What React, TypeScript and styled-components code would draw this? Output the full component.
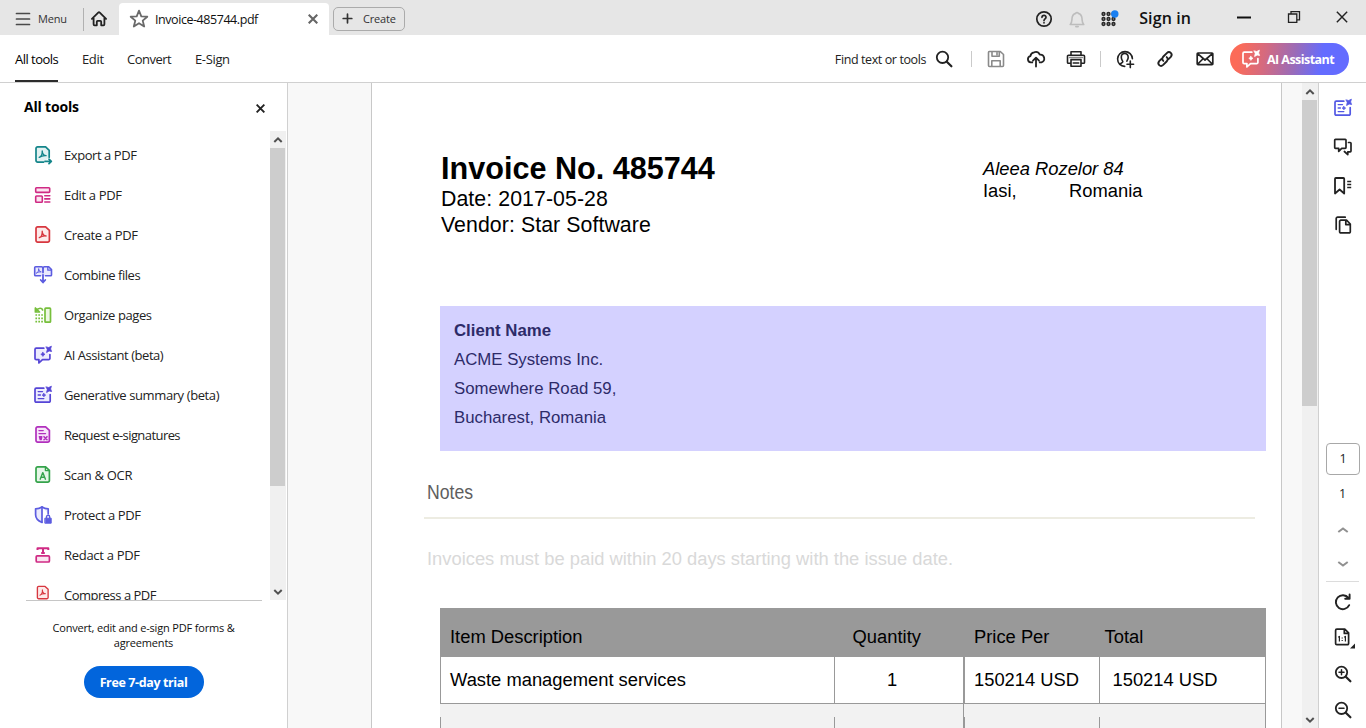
import React from "react";
import styled, { createGlobalStyle } from "styled-components";

const Global = createGlobalStyle`
  * { box-sizing: border-box; }
  html, body { margin: 0; padding: 0; overflow: hidden; background: #fff; }
  body { font-family: "Open Sans", "Noto Sans", sans-serif; color: #222; }
  svg { display: block; flex: none; }
`;

const Window = styled.div`
  width: 1366px;
  height: 728px;
  display: flex;
  flex-direction: column;
  overflow: hidden;
`;

const Label = styled.span<{ $size?: number; $ls?: number; $weight?: number; $color?: string }>`
  font-size: ${(p) => p.$size ?? 13}px;
  letter-spacing: ${(p) => p.$ls ?? -0.36}px;
  font-weight: ${(p) => p.$weight ?? 400};
  color: ${(p) => p.$color ?? "#222"};
  white-space: nowrap;
`;

const Slot = styled.div<{ $w?: number; $h?: number; $raise?: number }>`
  width: ${(p) => (p.$w ? `${p.$w}px` : "auto")};
  height: ${(p) => (p.$h ? `${p.$h}px` : "auto")};
  padding-bottom: ${(p) => p.$raise ?? 0}px;
  flex: none;
  display: flex;
  align-items: center;
  justify-content: center;
`;

const Spacer = styled.div`
  flex: 1;
`;

/* ---------- title bar ---------- */

const TitleBar = styled.header`
  height: 35px;
  flex: none;
  display: flex;
  background: #e6e6e6;
`;

const MenuButton = styled.div`
  width: 83px;
  height: 37px;
  padding-left: 15px;
  display: flex;
  align-items: center;
  gap: 7px;
`;

const TitleDivider = styled.div`
  width: 1px;
  height: 23px;
  margin-top: 8px;
  background: #b1b1b1;
`;

const HomeButton = styled.div`
  width: 35px;
  height: 37px;
  padding-left: 5px;
  display: flex;
  align-items: center;
`;

const Tab = styled.div`
  width: 210px;
  height: 32px;
  margin-top: 3px;
  padding: 0 11px 0 10px;
  border-radius: 4px 4px 0 0;
  background: #fff;
  display: flex;
  align-items: center;
`;

const CreateButton = styled.div`
  width: 72px;
  height: 24px;
  margin: 7px 0 0 4px;
  padding: 0 0 1px 8px;
  border: 1px solid #ababab;
  border-radius: 5px;
  display: flex;
  align-items: center;
  gap: 10px;
`;

const AccountArea = styled.div`
  height: 37px;
  display: flex;
  align-items: center;
`;

const SignIn = styled.div`
  margin-left: 14px;
  padding-bottom: 2px;
`;

const WindowControls = styled.div`
  height: 33px;
  margin-left: 28px;
  display: flex;
  align-items: center;
`;

/* ---------- tool bar ---------- */

const ToolBar = styled.nav`
  height: 48px;
  flex: none;
  display: flex;
  border-bottom: 1px solid #d0d0d0;
  padding-left: 15px;
`;

const ToolTab = styled.div<{ $active?: boolean; $w: number }>`
  width: ${(p) => p.$w}px;
  height: 47px;
  padding-top: 2px;
  margin-right: 24px;
  display: flex;
  align-items: center;
  border-bottom: 2px solid ${(p) => (p.$active ? "#2c2c2c" : "transparent")};
`;

const ToolActions = styled.div`
  height: 48px;
  display: flex;
  align-items: center;
`;

const ToolDivider = styled.div`
  width: 1px;
  height: 16px;
  background: #cacaca;
`;

const AssistantButton = styled.div`
  width: 119px;
  height: 32px;
  margin: 0 17px 0 5px;
  padding-left: 11px;
  border-radius: 16px;
  background: linear-gradient(100deg, #fc6b58 8%, #d46a80 30%, #9a6bb8 54%, #646cff 76%, #646cff 100%);
  display: flex;
  align-items: center;
  gap: 6px;
`;

/* ---------- main ---------- */

const Main = styled.main`
  flex: 1;
  display: flex;
  min-height: 0;
`;

const SidePanel = styled.aside`
  width: 288px;
  flex: none;
  border-right: 1px solid #d0d0d0;
  display: flex;
  flex-direction: column;
`;

const PanelHead = styled.div`
  height: 48px;
  padding: 0 20px 1px 24px;
  display: flex;
  justify-content: space-between;
  align-items: center;
`;

const PanelClose = styled.div`
  padding: 4px 2px 0 0;
`;

const PanelScroll = styled.div`
  height: 470px;
  display: flex;
`;

const ToolList = styled.div`
  width: 236px;
  margin-left: 26px;
  height: 470px;
  padding-top: 4px;
  overflow: hidden;
  border-bottom: 1px solid #c6c6c6;
`;

const ToolItem = styled.div`
  height: 40px;
  display: flex;
  align-items: center;
  padding-left: 7px;
  gap: 11px;
`;

const PanelTrack = styled.div`
  width: 16px;
  height: 469px;
  margin-left: 8px;
  background: #f0f0f0;
`;

const DocTrack = styled.div`
  width: 16px;
  height: 645px;
  display: flex;
  flex-direction: column;
  background: #f0f0f0;
`;

const Thumb = styled.div<{ $h: number }>`
  width: 15px;
  height: ${(p) => p.$h}px;
  background: #cdcdcd;
`;

const Promo = styled.div`
  width: 287px;
  padding-top: 19px;
  display: flex;
  flex-direction: column;
  align-items: center;
`;

const PromoText = styled.p`
  margin: 0 0 16px;
  font-size: 11px;
  line-height: 15px;
  text-align: center;
  color: #111;
  letter-spacing: -0.18px;
`;

const TrialButton = styled.div`
  width: 120px;
  height: 32px;
  border-radius: 16px;
  background: #0265dc;
  display: flex;
  align-items: center;
  justify-content: center;
`;

/* ---------- document ---------- */

const DocArea = styled.section`
  width: 1030px;
  flex: none;
  background: #f8f8f8;
  display: flex;
  padding-left: 83px;
`;

const Page = styled.article`
  width: 911px;
  height: 645px;
  margin-right: 20px;
  padding: 68px 15px 0 0;
  overflow: hidden;
  background: #fff;
  border: solid #c8c8c8;
  border-width: 0 1px;
  font-family: "Liberation Sans", Arial, sans-serif;
  color: #000;
`;

const DocHead = styled.div`
  display: flex;
  padding-left: 69px;
`;

const DocTitle = styled.h1`
  margin: 0;
  width: 542px;
  height: 35px;
  font-size: 30.6px;
  line-height: 35px;
  font-weight: 700;
  white-space: nowrap;
`;

const DocMeta = styled.div`
  font-size: 21.3px;
  line-height: 26px;
  letter-spacing: 0.07px;
`;

const Address = styled.address`
  padding-top: 7px;
  font-size: 18.35px;
  line-height: 22px;
  font-style: normal;
  em { display: block; }
`;

const City = styled.div`
  display: grid;
  grid-template-columns: 86px auto;
`;

const Client = styled.div`
  height: 145px;
  margin: 68px 0 0 68px;
  padding: 10px 0 0 14px;
  background: #d4d1ff;
  color: #2d2b69;
  font-size: 16.8px;
  line-height: 29px;
`;

const Notes = styled.h2`
  margin: 29px 0 0 55px;
  font-size: 20.5px;
  line-height: 24px;
  font-weight: 400;
  color: #5e5e5e;
  transform: scaleX(0.86);
  transform-origin: 0 0;
`;

const Rule = styled.div`
  height: 2px;
  width: 831px;
  margin: 13px 0 29px 52px;
  background: #edece2;
`;

const NoteText = styled.p`
  margin: 0 0 38px 55px;
  font-size: 18.35px;
  line-height: 22px;
  color: #d9d9d9;
`;

const Table = styled.div`
  margin-left: 68px;
  font-size: 18.35px;
  line-height: 22px;
`;

const Row = styled.div<{ $h: number; $bg?: string; $line?: boolean }>`
  display: grid;
  grid-template-columns: 394px 129px 136px 167px;
  height: ${(p) => p.$h}px;
  background: ${(p) => p.$bg ?? "#fff"};
  border-bottom: ${(p) => (p.$line ? "1px solid #999" : "0")};
`;

const Cell = styled.div<{ $l?: number; $r?: number; $top?: number; $pad?: number }>`
  border-left: ${(p) => p.$l ?? 0}px solid #999;
  border-right: ${(p) => p.$r ?? 0}px solid #999;
  padding: ${(p) => p.$top ?? 0}px 0 0 ${(p) => Math.max(0, (p.$pad ?? 0) - (p.$l ?? 0))}px;
  white-space: nowrap;
`;

/* ---------- right rail ---------- */

const Rail = styled.aside`
  width: 48px;
  border-left: 1px solid #d0d0d0;
  display: flex;
  flex-direction: column;
  align-items: center;
  padding-top: 5px;
`;

const PageBox = styled.div`
  width: 34px;
  height: 32px;
  margin: 199px 0 0 1px;
  padding-bottom: 1px;
  border: 1px solid #a8a8a8;
  border-radius: 4px;
  display: flex;
  align-items: center;
  justify-content: center;
`;

const RailRule = styled.div`
  width: 33px;
  height: 1px;
  background: #dcdcdc;
`;

/* ---------- icons ---------- */

type IconProps = { size?: number; color?: string; sw?: number; fill?: string; children: React.ReactNode };
const Icon = ({ size = 20, color = "#222", sw = 1.6, fill = "none", children }: IconProps) => (
  <svg width={size} height={size} viewBox={`0 0 ${size} ${size}`} fill={fill} stroke={color} strokeWidth={sw} strokeLinecap="round" strokeLinejoin="round">
    {children}
  </svg>
);

const acro = "M6.8 13.6c2-.8 3.2-3.4 3-6.6.1 2.9 1.5 4.7 3.9 4.9-2.6-.2-4.9.3-6.9 1.7z";
const spark = "M13.2 1.9l2.5.6 2.7-1.3-.8 2.7 1 2.6-2.5-.5-2.5 1.5.6-2.9z";
const sheet = "M4.6 1.8h8l3.8 3.6v10.2a1.6 1.6 0 0 1-1.6 1.6H4.6A1.6 1.6 0 0 1 3 15.6V3.4a1.6 1.6 0 0 1 1.6-1.6z";

const ExportIcon = () => (
  <Icon color="#14858a" sw={1.7}>
    <path d="M10.500 17.200H4.600a1.600 1.600 0 0 1-1.600-1.600V3.400a1.600 1.600 0 0 1 1.600-1.600h8l3.600 3.600v6.800" fill="#e3f2f2" />
    <path d={acro} strokeWidth={1.3} transform="translate(-.6 -1.200)" />
    <path d="M12 16.400h6M16 14.200l2.300 2.200-2.300 2.200" strokeWidth={1.8} />
  </Icon>
);
const EditIcon = () => (
  <Icon color="#cf2a84" sw={1.6}>
    <rect x="2.700" y="2.700" width="14" height="4.700" rx="0.8" fill="#fbe4f0" />
    <rect x="2.700" y="11" width="6.600" height="6.300" rx="0.8" fill="#fbe4f0" />
    <path d="M11.800 10.800h5M11.800 13.900h5M11.800 17h5" />
  </Icon>
);
const CreateIcon = ({ size = 20 }: { size?: number }) => (
  <svg width={size} height={size} viewBox="0 0 20 20" fill="none" stroke="#d7373f" strokeWidth={1.7} strokeLinejoin="round">
    <path d={sheet} fill="#fdeaea" />
    <path d={acro} strokeWidth={1.3} transform="translate(-.6 -.9)" />
  </svg>
);
const CombineIcon = () => (
  <Icon color="#5c5ce0" sw={1.6}>
    <path d="M7.500 10.800H2.600a.9.9 0 0 1-.9-.9V2.700a.9.9 0 0 1 .9-.9h5.900a1.500 1.500 0 0 1 1.500 1.200 1.500 1.500 0 0 1 1.500-1.200h4.200l2.800 2.800v5.300a.9.9 0 0 1-.9.9h-5.100" fill="#e9e9fd" />
    <path d="M14.800 2v3.200h3.400" strokeWidth={1.3} />
    <path d={acro} strokeWidth={1.5} transform="translate(-.8 -1) scale(.66)" />
    <path d="M10 3v4.500M10 9.800v7M7.700 15l2.300 2.500 2.300-2.500" strokeWidth={1.8} />
  </Icon>
);
const OrganizeIcon = () => (
  <Icon color="#77bf3c" sw={1.7}>
    <rect x="12" y="3.200" width="5.500" height="14" rx="0.700" fill="#edf8e3" />
    <path d="M9.600 5c-.6-2.300-4.200-2.500-5.900.3M2.400 3v4h4.100z" />
    <path d="M2.400 10h7.500M2.400 13.300h7.500M2.400 16.700h7.500" strokeDasharray="1.700 1.200" strokeLinecap="butt" strokeWidth={1.700} />
  </Icon>
);
const ChatSparkIcon = ({ color = "#5545d6", bg = "#ecebfd" }: { color?: string; bg?: string }) => (
  <Icon color={color} sw={1.7}>
    <path d="M10.800 3.200H3.200a1.200 1.200 0 0 0-1.200 1.200v9a1.200 1.200 0 0 0 1.200 1.200h2.700v3.400l3.600-3.400h6.200a1.200 1.200 0 0 0 1.200-1.200V9.600" fill={bg} />
    <path d={spark} fill={color} strokeWidth={0.8} />
    <path d="M9.900 7.300l.8 1.300 1.300.7-1.300.8-.8 1.300-.8-1.300-1.300-.8 1.300-.7z" fill={color} strokeWidth={0.7} />
  </Icon>
);
const SummaryIcon = ({ color = "#5545d6", bg = "#ecebfd" }: { color?: string; bg?: string }) => (
  <Icon color={color} sw={1.7}>
    <path d="M10.800 3.200H3.200a1.200 1.200 0 0 0-1.200 1.200v11.600a1.200 1.200 0 0 0 1.200 1.200h12.800a1.200 1.200 0 0 0 1.200-1.200V9.600" fill={bg} />
    <path d={spark} fill={color} strokeWidth={0.8} />
    <path d="M5.200 6.600h4.300M5.200 10h2.200M5.200 13.600h5.600" strokeWidth={1.4} />
    <path d="M10.900 8.500l.7 1 1 .6-1 .6-.7 1-.7-1-1-.6 1-.6z" fill={color} strokeWidth={0.8} />
  </Icon>
);
const SignIcon = () => (
  <Icon color="#b130bd" sw={1.7}>
    <path d={sheet} fill="#f8e6fa" />
    <path d="M6 5.600h4.200M6 8.600h6.500" strokeWidth={1.4} />
    <path d="M6.500 11.800h2.200l-.6 2.700h-.8zM11 11.700l3 3M14 11.700l-3 3" strokeWidth={1.6} />
  </Icon>
);
const ScanIcon = () => (
  <Icon color="#35a34b" sw={1.7}>
    <path d={sheet} fill="#e6f6e8" />
    <path d="M12.400 2v3.600h3.800" strokeWidth={1.3} />
    <path d="M7.200 14.200l2.600-6.600 2.600 6.600M8 12.200h3.600" strokeWidth={1.4} />
  </Icon>
);
const ProtectIcon = () => (
  <Icon color="#5c5ce0" sw={1.7}>
    <path d="M9 1.800c-1.700 1.400-3.900 2-6.400 2v6c0 3.600 2.700 6.200 6.400 7.600M9 1.800c1.700 1.400 3.800 2 6.200 2v5" fill="#eaeafd" />
    <path d="M9 2v15" />
    <path d="M12.200 13.200h6v5h-6z" fill="#5c5ce0" strokeWidth={1} />
    <path d="M13.500 13v-1.100a1.600 1.600 0 0 1 3.200 0V13" strokeWidth={1.4} />
  </Icon>
);
const RedactIcon = () => (
  <Icon color="#cf2a84" sw={1.7}>
    <rect x="3.200" y="10.800" width="13.200" height="6.200" rx="1" fill="#fbe4f0" />
    <path d="M4.500 4.900V3.300h10.800v1.600M10 3.300v5M8.200 8h3.600" strokeLinecap="butt" strokeWidth={2} />
  </Icon>
);

const SearchIcon = ({ mark }: { mark?: string }) => (
  <Icon sw={1.8}>
    <circle cx="8.500" cy="8.300" r="5.700" />
    <path d="M12.800 12.700l4.600 4.600" strokeWidth={2.2} />
    {mark && <path d={mark} strokeWidth={1.5} />}
  </Icon>
);

const Chevron = ({ down, color = "#505050", w = 8, sw = 2 }: { down?: boolean; color?: string; w?: number; sw?: number }) => (
  <svg width={w + 2} height={8} viewBox={`0 0 ${w + 2} 8`} fill="none" stroke={color} strokeWidth={sw}>
    <path d={down ? `M1.300 2l${w / 2 - 0.3} 3.600 ${w / 2 - 0.3} -3.600` : `M1.300 6l${w / 2 - 0.3} -3.600 ${w / 2 - 0.3} 3.600`} />
  </svg>
);

const Cross = ({ size, color, sw }: { size: number; color: string; sw: number }) => (
  <svg width={size} height={size} viewBox="0 0 10 10" stroke={color} strokeWidth={sw}>
    <path d="M.7.7l8.600 8.600M9.300.7L.7 9.300" />
  </svg>
);

const tools = [
  { name: "Export a PDF", icon: <ExportIcon />, ls: -0.43 },
  { name: "Edit a PDF", icon: <EditIcon />, ls: -0.33 },
  { name: "Create a PDF", icon: <CreateIcon />, ls: -0.36 },
  { name: "Combine files", icon: <CombineIcon />, ls: -0.48 },
  { name: "Organize pages", icon: <OrganizeIcon />, ls: -0.42 },
  { name: "AI Assistant (beta)", icon: <ChatSparkIcon />, ls: -0.46 },
  { name: "Generative summary (beta)", icon: <SummaryIcon />, ls: -0.4 },
  { name: "Request e-signatures", icon: <SignIcon />, ls: -0.57 },
  { name: "Scan & OCR", icon: <ScanIcon />, ls: -0.3 },
  { name: "Protect a PDF", icon: <ProtectIcon />, ls: -0.4 },
  { name: "Redact a PDF", icon: <RedactIcon />, ls: -0.3 },
  { name: "Compress a PDF", icon: <Slot $w={20} $h={20} $raise={4}><CreateIcon size={16} /></Slot>, ls: -0.5 },
];

export default function App() {
  return (
    <Window>
      <Global />
      <TitleBar>
        <MenuButton>
          <Icon size={16} color="#4a4a4a" sw={1.7}><path d="M1.500 2.500h13M1.500 8h13M1.500 13.500h13" /></Icon>
          <Label $size={11} $ls={-0.2} $color="#333">Menu</Label>
        </MenuButton>
        <TitleDivider />
        <HomeButton>
          <Icon sw={1.8}>
            <path d="M2.900 9.900L9.200 3.600a1.200 1.200 0 0 1 1.600 0l6.300 6.300M4.600 9v6.300a1 1 0 0 0 1 1h2.200v-3.600a.8.8 0 0 1 .8-.8h2.800a.8.8 0 0 1 .8.8v3.600h2.200a1 1 0 0 0 1-1V9" />
          </Icon>
        </HomeButton>
        <Tab>
          <Icon color="#6a6a6a" sw={1.8}>
            <path d="M10 1.700l2.300 5.600 6 .4-4.600 3.900 1.500 5.900-5.200-3.300-5.200 3.300 1.500-5.900L1.700 7.700l6-.4z" />
          </Icon>
          <Slot $w={6} />
          <Label $size={12.5} $ls={-0.44} $color="#111">Invoice-485744.pdf</Label>
          <Spacer />
          <Cross size={10} color="#666" sw={2.1} />
        </Tab>
        <CreateButton>
          <Icon size={11} color="#333" sw={1.7}><path d="M5.500 1.200v8.600M1.200 5.500h8.600" /></Icon>
          <Label $size={11} $ls={-0.2} $color="#333">Create</Label>
        </CreateButton>
        <Spacer />
        <AccountArea>
          <Slot $w={32}>
            <Icon sw={1.7}>
              <circle cx="10" cy="10" r="7.200" />
              <path d="M8 8.300c.1-2.700 4.100-2.600 4-.1 0 1.600-2 1.600-2 3.300M10 13.700v.1" />
            </Icon>
          </Slot>
          <Slot $w={33}>
            <Icon color="#bdbdbd" sw={1.6}>
              <path d="M3.200 15.500c1.800-1.600 1.600-3.200 1.800-6 .2-2.700 1.700-4.600 3.700-5.100a1.400 1.400 0 0 1 2.600 0c2 .5 3.500 2.400 3.700 5.100.2 2.800 0 4.400 1.800 6zM8.800 17.600h2.400" />
            </Icon>
          </Slot>
          <Slot $w={32}>
            <svg width="22" height="22" viewBox="0 0 22 22" fill="#888" stroke="#2a2a2a" strokeWidth="1.500">
              {[6, 11, 16].map((y) => [5.500, 10.500, 15.500].map((x) => <circle key={`${x}-${y}`} cx={x} cy={y} r="1.400" />))}
              <circle cx="16.800" cy="6" r="3.700" fill="#1a7ff0" stroke="none" />
            </svg>
          </Slot>
          <SignIn><Label $size={16} $ls={0.1} $weight={600} $color="#111">Sign in</Label></SignIn>
        </AccountArea>
        <WindowControls>
          <Slot $w={50}><Icon size={14} color="#111" sw={1.8}><path d="M0 7.500h14" /></Icon></Slot>
          <Slot $w={49}>
            <svg width="14" height="14" viewBox="0 0 14 14" fill="none" stroke="#222" strokeWidth="1.300">
              <path d="M1.500 4h8.300v8.300H1.500zM4 3.800V1.600h8.500v8.300h-2.300" />
            </svg>
          </Slot>
          <Slot $w={48}><Cross size={12} color="#222" sw={1.2} /></Slot>
        </WindowControls>
      </TitleBar>

      <ToolBar>
        <ToolTab $active $w={43}><Label $color="#000" $ls={-0.52}>All tools</Label></ToolTab>
        <ToolTab $w={21}><Label>Edit</Label></ToolTab>
        <ToolTab $w={44}><Label $ls={-0.5}>Convert</Label></ToolTab>
        <ToolTab $w={36}><Label>E-Sign</Label></ToolTab>
        <Spacer />
        <ToolActions>
          <Label $size={12.5} $ls={-0.4}>Find text or tools</Label>
          <Slot $w={36}><SearchIcon /></Slot>
          <Slot $w={9} />
          <ToolDivider />
          <Slot $w={4} />
          <Slot $w={40}>
            <Icon color="#8a8a8a" sw={1.6}>
              <path d="M3.300 2.500h11l3.200 3v11a1 1 0 0 1-1 1H3.500a1 1 0 0 1-1-1v-13a1 1 0 0 1 .8-1zM6 2.700v4.500h7.300V2.700M11 3.800v2M5.800 17.300v-5.600h8.400v5.600" />
            </Icon>
          </Slot>
          <Slot $w={40}>
            <Icon sw={1.8}>
              <path d="M6.300 13.400H4.800a3.200 3.200 0 0 1-.4-6.300A4.500 4.500 0 0 1 8 3.300a4.700 4.700 0 0 1 5.800 2.300 4 4 0 0 1 1.600 7.800h-1.700M10 17.500V9.200M7 11.700l3-3 3 3" />
            </Icon>
          </Slot>
          <Slot $w={40}>
            <Icon sw={1.7}>
              <path d="M5 6.300V2.800h10v3.500M4.600 14.200H2.300a.8.8 0 0 1-.8-.8V7.300a1 1 0 0 1 1-1h15a1 1 0 0 1 1 1v6.100a.8.8 0 0 1-.8.8h-2.300M5 10.600h10v6.700H5zM7.300 14h5.400" strokeWidth={1.6} />
              <path d="M3.500 8.500h13" stroke="#888" strokeWidth={1.3} />
            </Icon>
          </Slot>
          <Slot $w={4} />
          <ToolDivider />
          <Slot $w={4} />
          <Slot $w={40}>
            <Icon sw={1.6}>
              <path d="M9.700 17.400a7.400 7.400 0 1 1 7.700-7.600M4.800 15.400c.6-1.300 2.800-1.600 3-2.500.2-1-1.500-2-1.500-4.700 0-4.800 6.900-4.900 6.900 0 0 2.300-1.100 3-1.300 3.900M15.300 12v6.600M12 15.300h6.600" />
            </Icon>
          </Slot>
          <Slot $w={40}>
            <Icon sw={1.9}>
              <path d="M8.300 11.900c-1.400-1.200-1.300-3 .1-4.400l3.400-3.400c2.900-2.600 6.400.9 4 3.800l-2 2M11.700 8.100c1.400 1.200 1.300 3-.1 4.400l-3.400 3.400c-2.900 2.600-6.400-.9-4-3.800l2-2" />
            </Icon>
          </Slot>
          <Slot $w={40}>
            <Icon sw={1.7}>
              <path d="M3 4h14a.8.8 0 0 1 .8.8v10a.8.8 0 0 1-.8.8H3a.8.8 0 0 1-.8-.8v-10A.8.8 0 0 1 3 4zM2.600 4.600L10 11l7.400-6.400M2.800 15l5-5M17.200 15l-5-5" />
            </Icon>
          </Slot>
          <AssistantButton>
            <ChatSparkIcon color="#fff" bg="none" />
            <Label $size={12.5} $weight={700} $color="#fff" $ls={-0.55}>AI Assistant</Label>
          </AssistantButton>
        </ToolActions>
      </ToolBar>

      <Main>
        <SidePanel>
          <PanelHead>
            <Label $size={14} $weight={700} $color="#000" $ls={-0.18}>All tools</Label>
            <PanelClose><Cross size={9} color="#222" sw={2.1} /></PanelClose>
          </PanelHead>
          <PanelScroll>
            <ToolList>
              {tools.map((t) => (
                <ToolItem key={t.name}>{t.icon}<Label $ls={t.ls}>{t.name}</Label></ToolItem>
              ))}
            </ToolList>
            <PanelTrack>
              <Slot $w={15} $h={17}><Chevron /></Slot>
              <Thumb $h={338} />
              <Slot $w={15} $h={97} />
              <Slot $w={15} $h={17}><Chevron down /></Slot>
            </PanelTrack>
          </PanelScroll>
          <Promo>
            <PromoText>Convert, edit and e-sign PDF forms &amp;<br />agreements</PromoText>
            <TrialButton><Label $size={12.5} $weight={700} $color="#fff" $ls={-0.38}>Free 7-day trial</Label></TrialButton>
          </Promo>
        </SidePanel>

        <DocArea>
          <Page>
            <DocHead>
              <div>
                <DocTitle>Invoice No. 485744</DocTitle>
                <DocMeta>Date: 2017-05-28<br />Vendor: Star Software</DocMeta>
              </div>
              <Address>
                <em>Aleea Rozelor 84</em>
                <City><span>Iasi,</span><span>Romania</span></City>
              </Address>
            </DocHead>
            <Client>
              <b>Client Name</b><br />ACME Systems Inc.<br />Somewhere Road 59,<br />Bucharest, Romania
            </Client>
            <Notes>Notes</Notes>
            <Rule />
            <NoteText>Invoices must be paid within 20 days starting with the issue date.</NoteText>
            <Table>
              <Row $h={49} $bg="#999">
                <Cell $top={18} $pad={10}>Item Description</Cell>
                <Cell $top={18} $pad={18.6}>Quantity</Cell>
                <Cell $top={18} $pad={11}>Price Per</Cell>
                <Cell $top={18} $pad={5.6}>Total</Cell>
              </Row>
              <Row $h={47} $line>
                <Cell $l={1} $top={12} $pad={10}>Waste management services</Cell>
                <Cell $l={1} $top={12} $pad={53}>1</Cell>
                <Cell $l={2} $top={12} $pad={11}>150214 USD</Cell>
                <Cell $l={1} $r={1} $top={12} $pad={13.5}>150214 USD</Cell>
              </Row>
              <Row $h={13} $bg="#f2f2f2">
                <Cell /><Cell /><Cell $l={1} /><Cell $r={1} />
              </Row>
              <Row $h={40} $bg="#f2f2f2">
                <Cell $l={1} /><Cell $l={1} /><Cell $l={2} /><Cell $l={1} $r={1} />
              </Row>
            </Table>
          </Page>
          <DocTrack>
            <Slot $w={15} $h={17}><Chevron /></Slot>
            <Thumb $h={306} />
            <Spacer />
            <Slot $w={15} $h={17}><Chevron down /></Slot>
          </DocTrack>
        </DocArea>

        <Rail>
          <Slot $h={39}><SummaryIcon color="#5258e4" bg="#fff" /></Slot>
          <Slot $h={39}>
            <Icon sw={1.7}>
              <path d="M2.500 2.300h9.700a.8.8 0 0 1 .8.800v7.400a.8.8 0 0 1-.8.800H8.700l-3 3.100v-3.100H2.500a.8.8 0 0 1-.8-.8V3.100a.8.8 0 0 1 .8-.8zM15.500 5.500h1.700a.8.8 0 0 1 .8.800v7.800a.8.8 0 0 1-.8.800h-2.400v2.700l-3.400-3.100" />
            </Icon>
          </Slot>
          <Slot $h={39}>
            <Icon sw={1.8}>
              <path d="M2.800 2h7.600a.8.8 0 0 1 .8.800v14.700l-4.600-4-4.600 4V2.800a.8.8 0 0 1 .8-.8z" />
              <path d="M14.200 5.500h4M14.200 8.500h4M14.200 11.500h4" strokeWidth={1.6} strokeLinecap="butt" />
            </Icon>
          </Slot>
          <Slot $h={39}>
            <Icon sw={1.7}>
              <path d="M7.800 5.200h5.700l3.800 3.800v7.700a1.200 1.200 0 0 1-1.200 1.200H7.800a1.200 1.200 0 0 1-1.200-1.200V6.400a1.200 1.200 0 0 1 1.200-1.200zM12.800 5.500v4.100h4.200M3.200 14.300V3.600a1.400 1.400 0 0 1 1.400-1.400h7.600" />
            </Icon>
          </Slot>
          <PageBox><Label $size={12.5}>1</Label></PageBox>
          <Slot $h={37}><Label $size={12.5}>1</Label></Slot>
          <Slot $h={36}><Chevron color="#909090" w={10} /></Slot>
          <Slot $h={32}><Chevron down color="#909090" w={10} /></Slot>
          <Slot $h={1} />
          <RailRule />
          <Slot $h={39}>
            <Icon sw={1.9}><path d="M16.200 13.200a7 7 0 1 1-.8-7.300M16.600 2.400v4.400h-4.400" /></Icon>
          </Slot>
          <Slot $h={33}>
            <svg width="26" height="22" viewBox="0 0 26 22" fill="none" stroke="#222" strokeWidth="1.700" strokeLinejoin="round">
              <path d="M6.800 2.200h8l3.800 3.700v10.600a1.200 1.200 0 0 1-1.200 1.200H6.800a1.200 1.200 0 0 1-1.200-1.200V3.400a1.200 1.200 0 0 1 1.200-1.200zM14.300 2.500v3.900h4" />
              <path d="M8.200 10.200l1.200-.8v5M14.200 10.200l1.200-.8v5M12.200 10.600v.9M12.200 13v.9" strokeWidth="1.200" />
              <path d="M25 16.500v5h-5z" fill="#222" stroke="none" />
            </svg>
          </Slot>
          <Slot $h={39}><SearchIcon mark="M6 8.300h5M8.500 5.800v5" /></Slot>
          <Slot $h={34}><SearchIcon mark="M6 8.300h5" /></Slot>
        </Rail>
      </Main>
    </Window>
  );
}
